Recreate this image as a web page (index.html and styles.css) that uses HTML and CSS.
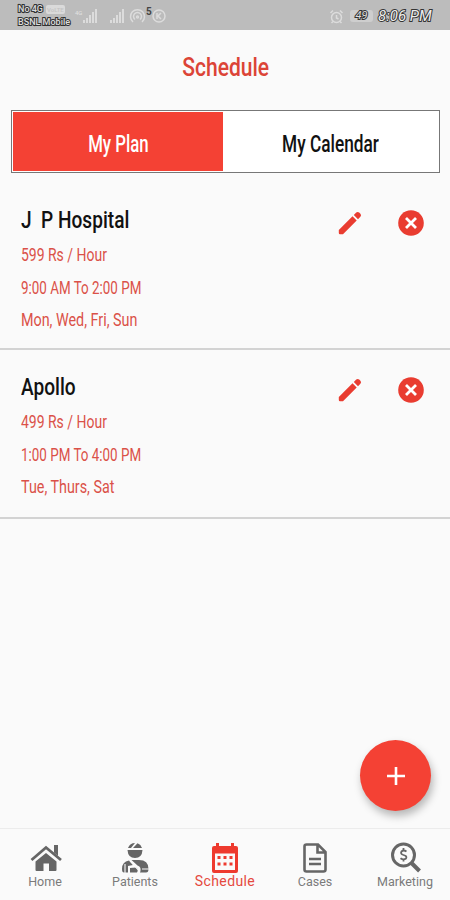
FILE: index.html
```html
<!DOCTYPE html>
<html lang="en">
<head>
    <meta charset="UTF-8">
    <meta name="viewport" content="width=device-width, initial-scale=1.0">
    <title>Schedule</title>
    <link rel="stylesheet" href="styles.css">
</head>
<body>

    <!-- shared icons -->
    <svg class="defs" width="0" height="0">
        <symbol id="pencil" viewBox="0 0 24 24">
            <path d="M.8 19 L14.5 5.3 L18.7 9.5 L5 23.2 H2 Q.8 23.2 .8 22 Z M15.8 4 L18.2 1.6 Q19.7 .2 21.2 1.6 L22.4 2.8 Q23.8 4.3 22.4 5.8 L20 8.2 Z"/>
        </symbol>
        <symbol id="close" viewBox="0 0 26 26">
            <circle cx="13" cy="13" r="12.8"/>
            <path d="M8 8 L18 18 M18 8 L8 18" stroke="#fff" stroke-width="2.8"/>
        </symbol>
        <symbol id="signal" viewBox="0 0 16 16">
            <path d="M1 12h2v3H1zM4 10h2v5H4zM7 7h2v8H7zM10 4h2v11h-2zM13 1h2v14h-2z"/>
        </symbol>
    </svg>

    <header class="status-bar">
        <div class="carrier">
            <div class="carrier-row"><span class="outlined">No 4G</span><span class="volte">VoLTE</span></div>
            <div class="outlined">BSNL Mobile</div>
        </div>
        <span class="net">4G</span>
        <svg class="signal" width="16" height="16"><use href="#signal"/></svg>
        <svg class="signal second" width="16" height="16"><use href="#signal"/></svg>
        <svg class="hotspot" width="17" height="16" viewBox="0 0 17 16">
            <path d="M4 14 A7 7 0 1 1 13 14 M6 11.5 A4 4 0 1 1 11 11.5"/>
            <circle cx="8.5" cy="9" r="1"/>
        </svg>
        <span class="five">5</span>
        <svg class="ring" width="14" height="14" viewBox="0 0 14 14">
            <circle cx="7" cy="7" r="6"/>
            <path d="M5 4v6M9 4 L6 7 L9 10"/>
        </svg>
        <svg class="alarm" width="15" height="15" viewBox="0 0 15 15">
            <circle cx="7.5" cy="8.5" r="5"/>
            <path d="M1.5 4 L4 1.5 M11 1.5 L13.5 4 M7.5 6v3l2 1M4 12.5l-1.5 1.5M11 12.5l1.5 1.5"/>
        </svg>
        <span class="battery outlined">49</span>
        <span class="clock outlined">8:06 PM</span>
    </header>

    <h1 class="page-title"><span class="narrow">Schedule</span></h1>

    <div class="tabs">
        <button class="tab active"><span class="narrow">My Plan</span></button>
        <button class="tab"><span class="narrow">My Calendar</span></button>
    </div>

    <main class="plans">
        <section class="plan">
            <div class="info">
                <h2>J&nbsp; P Hospital</h2>
                <p class="rate">599 Rs / Hour</p>
                <p class="hours">9:00 AM To 2:00 PM</p>
                <p class="days">Mon, Wed, Fri, Sun</p>
            </div>
            <svg class="edit" width="24" height="24"><use href="#pencil"/></svg>
            <svg class="remove" width="26" height="26"><use href="#close"/></svg>
        </section>
        <section class="plan">
            <div class="info">
                <h2>Apollo</h2>
                <p class="rate">499 Rs / Hour</p>
                <p class="hours">1:00 PM To 4:00 PM</p>
                <p class="days">Tue, Thurs, Sat</p>
            </div>
            <svg class="edit" width="24" height="24"><use href="#pencil"/></svg>
            <svg class="remove" width="26" height="26"><use href="#close"/></svg>
        </section>
    </main>

    <button class="add">
        <svg width="18" height="18" viewBox="0 0 18 18"><path d="M9 0v18M0 9h18"/></svg>
    </button>

    <nav class="bottom-nav">
        <a class="item">
            <svg width="34" height="32" viewBox="0 0 34 32">
                <path d="M18 11 L28.5 19.5 V28 Q28.5 29 27.5 29 H21 V21.5 H15.5 V29 H8.5 Q7.5 29 7.5 28 V19.5 Z"/>
                <path d="M26 3h4v11l-4-3.5z"/>
                <path d="M3.5 18 L18 5.5 L33 18" fill="none" stroke="#666" stroke-width="2.8"/>
            </svg>
            <span>Home</span>
        </a>
        <a class="item">
            <svg width="34" height="32" viewBox="0 0 34 32">
                <path d="M10 6 Q12 1 17 1 L13 6 Z M19.5 1.2 Q23 2.5 24 6 H15 Z M9.5 8 H24.5 Q24 16 17 16 Q10 16 9.5 8 Z"/>
                <path d="M11 18.5 L15 23 L10 24 V30.5 H6 Q4 30.5 4 27 Q4 19.5 11 18.5 Z M13.5 18 H21 Q30.5 18 30.5 27 Q30.5 30.5 28 30.5 H22 Q24 25 19.5 23.5 Z M12 26 L18 25.5 Q21 27 19 30.5 H12 Z"/>
                <path d="M7 22v9M12 19l10 11M24 27h7" stroke="#fafafa" stroke-width="1.1"/>
            </svg>
            <span>Patients</span>
        </a>
        <a class="item current">
            <svg width="34" height="32" viewBox="0 0 34 32">
                <path d="M8 1h3v3h12V1h3v3h2q2 0 2 2v23q0 2-2 2H6q-2 0-2-2V6q0-2 2-2h2z"/>
                <path d="M7 11.5h20V28H7z" fill="#fafafa"/>
                <path d="M9.5 14h3v3h-3zM15.5 14h3v3h-3zM21.5 14h3v3h-3zM9.5 20.5h3v3h-3zM15.5 20.5h3v3h-3zM21.5 20.5h3v3h-3z"/>
            </svg>
            <span>Schedule</span>
        </a>
        <a class="item">
            <svg width="34" height="32" viewBox="0 0 34 32" class="line">
                <path d="M8.5 2.5 H20 L27.5 10 V27.5 Q27.5 29.5 25.5 29.5 H8.5 Q6.5 29.5 6.5 27.5 V4.5 Q6.5 2.5 8.5 2.5 Z M19.5 3 V10.5 H27 M11 17h12M11 22h12"/>
            </svg>
            <span>Cases</span>
        </a>
        <a class="item">
            <svg width="34" height="32" viewBox="0 0 34 32" class="line">
                <circle cx="15.5" cy="13" r="11" stroke-width="3"/>
                <path d="M23 20.5 L31.5 29" stroke-width="4"/>
                <path d="M18.5 9.5 Q15.5 7.5 13.5 9.5 Q12 12 15.5 13 Q19.5 14 18 16.5 Q15.5 18.5 12.5 16.2 M15.5 6v2.5M15.5 17v2.5" stroke-width="1.8"/>
            </svg>
            <span>Marketing</span>
        </a>
    </nav>

</body>
</html>
```

FILE: styles.css
```css
* {
    box-sizing: border-box;
}
body {
    margin: 0;
    width: 450px;
    height: 900px;
    display: flex;
    flex-direction: column;
    position: relative;
    overflow: hidden;
    background: #fafafa;
    font-family: Roboto, "Liberation Sans", sans-serif;
}
.defs {
    position: absolute;
}
h1, h2, p {
    margin: 0;
    font-weight: 500;
}

/* status bar */
.status-bar {
    flex: none;
    display: flex;
    align-items: center;
    height: 30px;
    padding: 2px 15px 0 18px;
    background: #bcbcbc;
    color: #e2e2e2;
}
.outlined {
    color: #ddd;
    -webkit-text-stroke: 2px #333;
    paint-order: stroke fill;
    white-space: nowrap;
}
.carrier {
    width: 54px;
    font-size: 9px;
    line-height: 13px;
    font-weight: 500;
}
.carrier-row {
    display: flex;
    align-items: center;
    gap: 3px;
}
.volte {
    height: 9px;
    padding: 0 1px;
    border-radius: 2px;
    background: #dadada;
    color: #c3c3c3;
    font-size: 6px;
    line-height: 9px;
}
.net {
    margin: -8px 0 0 3px;
    width: 7px;
    font-size: 6px;
}
.signal {
    fill: #dcdcdc;
}
.second {
    margin-left: 11px;
}
.hotspot, .ring, .alarm {
    fill: none;
    stroke: #dcdcdc;
    stroke-width: 1.5;
}
.hotspot {
    margin-left: 4px;
}
.five {
    width: 6px;
    margin-top: -9px;
    color: #444;
    font-size: 10px;
    font-weight: 700;
}
.alarm {
    margin-left: auto;
}
.battery {
    width: 23px;
    margin: 0 5px 0 6px;
    border-radius: 3px;
    background: #cecece;
    font-size: 11px;
    font-style: italic;
    line-height: 12px;
    text-align: center;
}
.clock {
    width: 57px;
    color: #eee;
    font-size: 15px;
    font-style: italic;
}

/* title and tabs */
.narrow {
    display: inline-block;
    transform: scaleX(0.75);
}
.page-title {
    flex: none;
    height: 80px;
    padding: 1px 0 0 1px;
    color: #dc4437;
    font-size: 26px;
    line-height: 73px;
    text-align: center;
}
.page-title .narrow {
    transform: scaleX(0.81);
}
.tabs {
    flex: none;
    display: flex;
    width: 429px;
    height: 63px;
    margin-left: 11px;
    padding: 1px;
    border: 1px solid #777;
    background: #fff;
}
.tab {
    flex: 1;
    padding: 6px 1px 0 0;
    border: 0;
    background: #fff;
    color: #111;
    font-family: inherit;
    font-size: 23px;
    font-weight: 500;
}
.tab.active {
    flex: 0 0 210px;
    padding-right: 0;
    background: #f44134;
    color: #fff;
}
.tab.active .narrow {
    transform: scaleX(0.73);
}

/* plan rows */
.plans {
    flex: 1;
}
.plan {
    display: flex;
    align-items: flex-start;
    height: 169px;
    padding: 18px 26px 0 21px;
    border-bottom: 2px solid #d3d3d3;
}
.plan:first-child {
    height: 177px;
    padding-top: 28px;
}
.info {
    flex: 1;
}
.info h2, .info p {
    width: max-content;
    transform-origin: left;
}
.info h2 {
    height: 38px;
    color: #111;
    font-size: 24px;
    line-height: 38px;
    transform: scaleX(0.795);
}
.info p {
    height: 32.5px;
    color: #da5148;
    font-size: 18.5px;
    line-height: 33px;
    font-weight: 400;
}
.info .rate {
    transform: scaleX(0.755);
}
.info .hours {
    transform: scaleX(0.725);
}
.info .days {
    transform: scaleX(0.775);
}
.edit, .remove {
    flex: none;
    fill: #e93c30;
}
.edit {
    margin: 10px 36px 0 0;
}
.remove {
    margin-top: 9px;
}

.add {
    position: absolute;
    right: 19px;
    top: 740px;
    width: 71px;
    height: 71px;
    border: 0;
    border-radius: 50%;
    background: #f44134;
    box-shadow: 2px 5px 8px rgba(0, 0, 0, 0.28);
}
.add svg {
    display: block;
    margin: auto;
    stroke: #fff;
    stroke-width: 2.6;
}

/* bottom navigation */
.bottom-nav {
    flex: none;
    display: flex;
    height: 72px;
    padding-top: 13px;
    border-top: 1px solid #ececec;
}
.item {
    flex: 1;
    display: flex;
    flex-direction: column;
    align-items: center;
    fill: #666;
    color: #7b7b7b;
    font-size: 12.5px;
    line-height: 16px;
}
.current {
    fill: #ee3a2e;
    color: #e5493e;
    font-size: 14px;
    letter-spacing: 0.4px;
    line-height: 14px;
}
.line {
    fill: none;
    stroke: #666;
    stroke-width: 2.6;
}
```
